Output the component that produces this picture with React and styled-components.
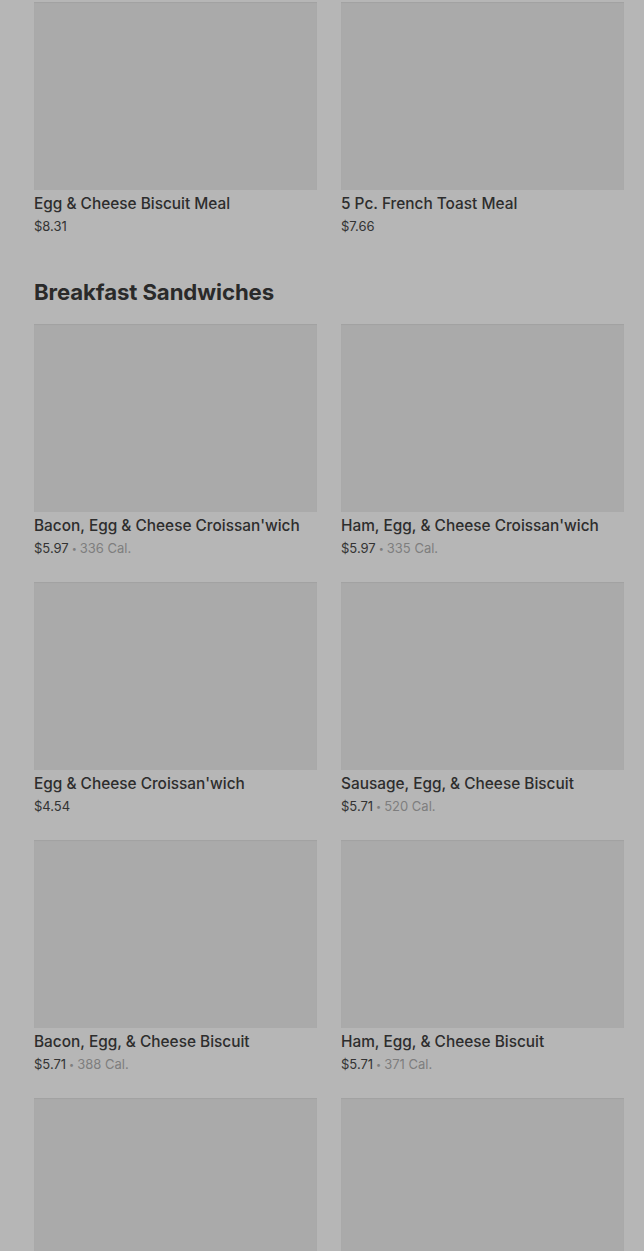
import React from 'react'
import styled, { createGlobalStyle } from 'styled-components'

const GlobalStyle = createGlobalStyle`
  html, body {
    margin: 0;
    padding: 0;
    background: #b6b6b6;
  }
  body {
    font-family: Inter, "Liberation Sans", Arial, sans-serif;
    color: #2d2d2d;
  }
`

const Page = styled.div`
  padding: 2px 20px 0 34px;
  height: 1249px;
  overflow: hidden;
`

const Section = styled.section`
  & + & {
    margin-top: 43px;
  }
`

const SectionTitle = styled.h2`
  margin: 0 0 18px;
  font-size: 22.2px;
  line-height: 28px;
  font-weight: 700;
  letter-spacing: -0.1px;
  color: #2a2a2a;
`

const Grid = styled.div`
  display: grid;
  grid-template-columns: minmax(0, 1fr) minmax(0, 1fr);
  column-gap: 24px;
  row-gap: 25px;
`

const Card = styled.div`
  display: flex;
  flex-direction: column;
  min-width: 0;
`

const Thumb = styled.div`
  height: 188px;
  background: #aaaaaa;
  box-shadow: inset 0 1px 1px rgba(0, 0, 0, 0.05);
`

const Name = styled.div`
  margin-top: 4px;
  font-size: 15.4px;
  line-height: 20px;
  font-weight: 500;
  color: #2d2d2d;
  white-space: nowrap;
`

const Meta = styled.div`
  margin-top: 3px;
  height: 18px;
  display: flex;
  align-items: center;
  font-size: 13px;
  color: #333;
`

const Cal = styled.span`
  color: #7e7e7e;
`

const Dot = styled.span`
  color: #7e7e7e;
  margin: 0 3px;
  font-size: 9px;
  line-height: 1;
`

const meals = [
  { name: 'Egg & Cheese Biscuit Meal', price: '$8.31' },
  { name: '5 Pc. French Toast Meal', price: '$7.66' },
]

const sandwiches = [
  { name: "Bacon, Egg & Cheese Croissan'wich", price: '$5.97', cal: '336 Cal.' },
  { name: "Ham, Egg, & Cheese Croissan'wich", price: '$5.97', cal: '335 Cal.' },
  { name: "Egg & Cheese Croissan'wich", price: '$4.54' },
  { name: 'Sausage, Egg, & Cheese Biscuit', price: '$5.71', cal: '520 Cal.' },
  { name: 'Bacon, Egg, & Cheese Biscuit', price: '$5.71', cal: '388 Cal.' },
  { name: 'Ham, Egg, & Cheese Biscuit', price: '$5.71', cal: '371 Cal.' },
  {},
  {},
]

const Item = ({ item }) => (
  <Card>
    <Thumb />
    {item.name && (
      <>
        <Name>{item.name}</Name>
        <Meta>
          {item.price}
          {item.cal && (
            <>
              <Dot>•</Dot>
              <Cal>{item.cal}</Cal>
            </>
          )}
        </Meta>
      </>
    )}
  </Card>
)

export default function App() {
  return (
    <>
      <GlobalStyle />
      <Page>
        <Section>
          <Grid>
            {meals.map((m, i) => <Item key={i} item={m} />)}
          </Grid>
        </Section>
        <Section>
          <SectionTitle>Breakfast Sandwiches</SectionTitle>
          <Grid>
            {sandwiches.map((m, i) => <Item key={i} item={m} />)}
          </Grid>
        </Section>
      </Page>
    </>
  )
}
